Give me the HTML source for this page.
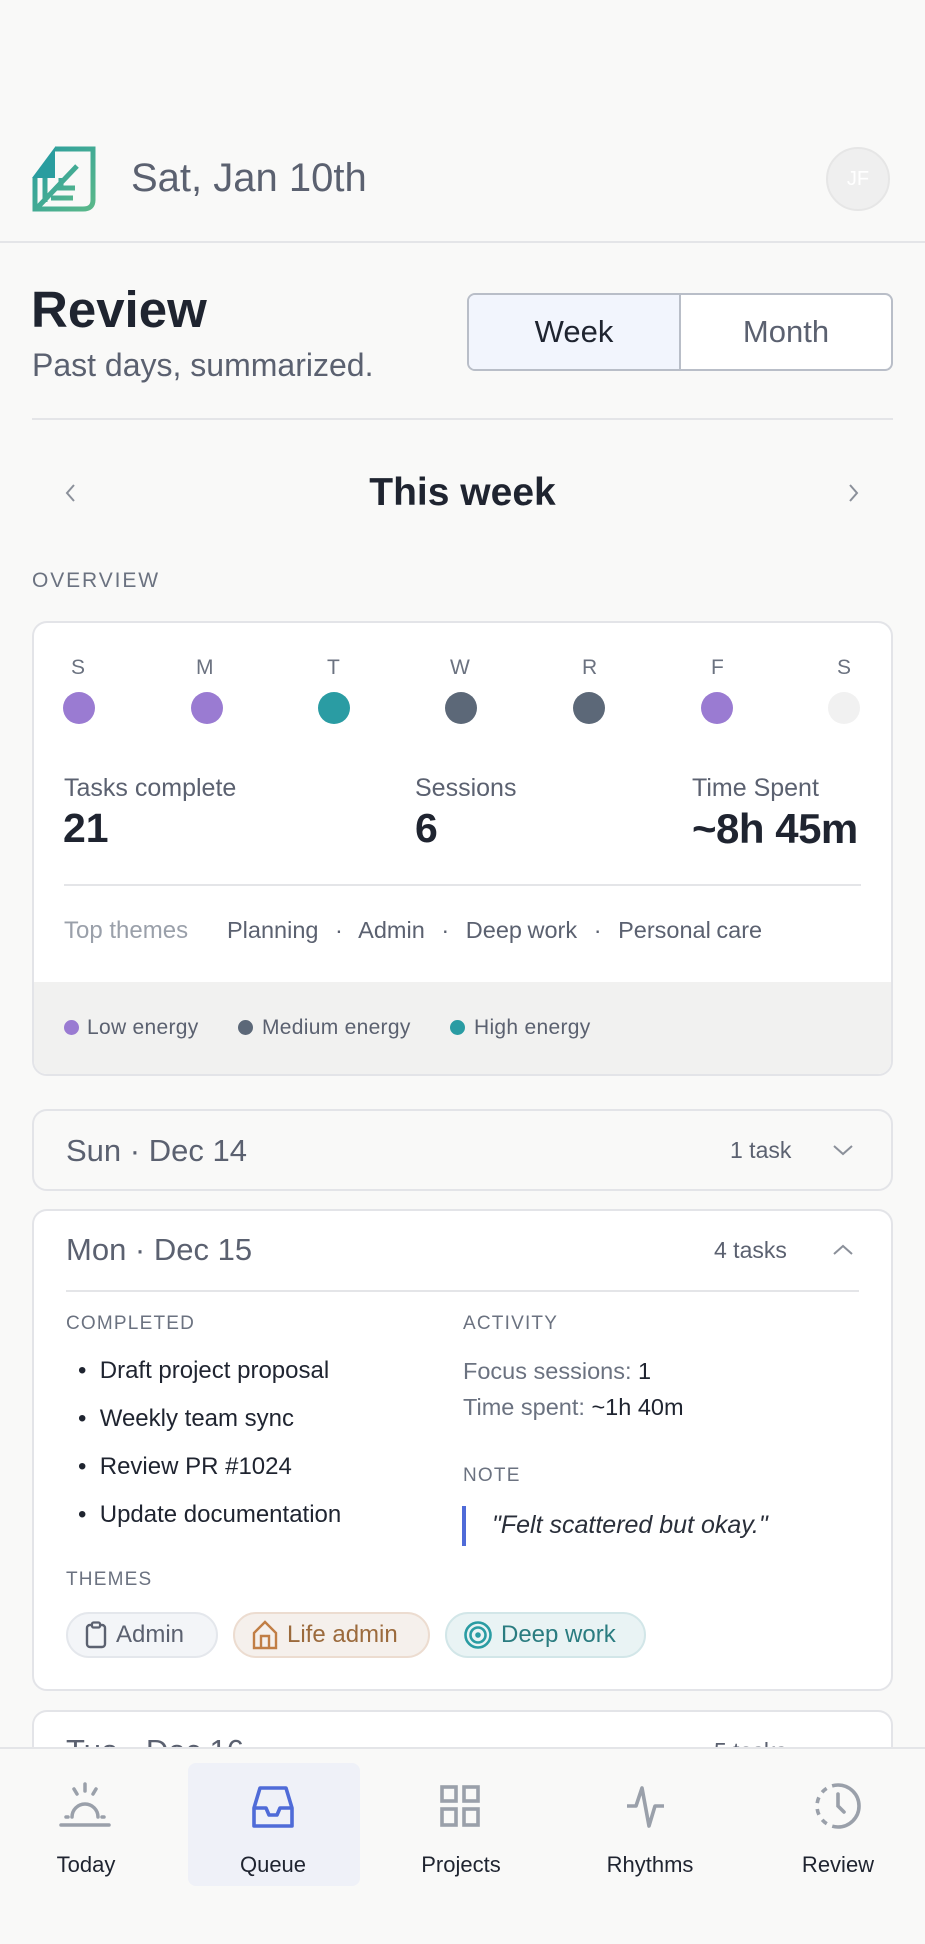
<!DOCTYPE html>
<html><head><meta charset="utf-8"><style>
*{margin:0;padding:0;box-sizing:border-box}
body{width:925px;height:1944px;background:#f9f9f8;font-family:"Liberation Sans",sans-serif;color:#1f2430;position:relative;overflow:hidden}
.a{position:absolute;white-space:nowrap}
.g{color:#6b7280}
.dot{position:absolute;width:32px;height:32px;border-radius:50%}
.lab{font-size:19px;letter-spacing:1.2px;color:#6b7280}
.card{position:absolute;left:32px;width:861px;background:#fff;border:2px solid #e3e4e8;border-radius:15px;overflow:hidden}
.chip{position:absolute;top:1612px;height:46px;border-radius:23px;font-size:24px;display:flex;align-items:center;gap:8px;padding-left:16px}
.nav{position:absolute;top:1852px;font-size:22px;transform:translateX(-50%);color:#1f2430}
</style></head><body>
<!-- header -->
<svg class="a" style="left:31px;top:146px" width="66" height="66" viewBox="0 0 66 66">
<defs><linearGradient id="lg" x1="0" y1="0" x2="1" y2="1"><stop offset="0" stop-color="#2a9d9f"/><stop offset="1" stop-color="#5ab88a"/></linearGradient></defs>
<path d="M24 3H62V54Q62 63 52 63H4V32" fill="none" stroke="url(#lg)" stroke-width="5"/>
<path d="M1 32L24 1V32Z" fill="#2a9d9f"/>
<path d="M14 32V56M6 62L46 20M26 42H44M30 32V42M20 52H42" fill="none" stroke="url(#lg)" stroke-width="5"/>
</svg>
<div class="a g" style="left:131px;top:156px;font-size:40px;color:#5b6170">Sat, Jan 10th</div>
<div class="a" style="left:826px;top:147px;width:64px;height:64px;border-radius:50%;background:#efefef;border:2px solid #e6e6e6;color:#fff;font-size:20px;display:flex;align-items:center;justify-content:center">JF</div>
<div class="a" style="left:0;top:241px;width:925px;height:2px;background:#e4e5e8"></div>
<div class="a" style="left:31px;top:280px;font-size:51px;font-weight:bold">Review</div>
<div class="a g" style="left:32px;top:347px;font-size:32px;color:#5b6170">Past days, summarized.</div>
<div class="a" style="left:467px;top:293px;width:426px;height:78px;border:2px solid #b9bec8;border-radius:8px;background:#fff;overflow:hidden">
<div class="a" style="left:0;top:0;width:212px;height:74px;background:#f2f5fd;border-right:2px solid #b9bec8;font-size:31px;display:flex;align-items:center;justify-content:center">Week</div>
<div class="a" style="left:212px;top:0;width:210px;height:74px;font-size:31px;color:#5b6170;display:flex;align-items:center;justify-content:center">Month</div>
</div>
<div class="a" style="left:32px;top:418px;width:861px;height:2px;background:#e4e5e8"></div>
<svg class="a" style="left:63px;top:482px" width="16" height="22"><path d="M11 3L4 11L11 19" fill="none" stroke="#8b909a" stroke-width="2"/></svg>
<div class="a" style="left:0;width:925px;text-align:center;top:471px;font-size:39px;font-weight:bold">This week</div>
<svg class="a" style="left:845px;top:482px" width="16" height="22"><path d="M5 3L12 11L5 19" fill="none" stroke="#8b909a" stroke-width="2"/></svg>
<div class="a" style="left:32px;top:569px;font-size:21px;letter-spacing:1.9px;color:#6b7280">OVERVIEW</div>
<!-- overview card -->
<div class="card" style="top:621px;height:455px">
<div class="a" style="left:0;top:359px;width:861px;height:96px;background:#f1f1f0"></div>
</div>
<div class="a g" style="left:0;top:656px;width:925px;font-size:21px">
<span class="a" style="left:71px">S</span><span class="a" style="left:196px">M</span><span class="a" style="left:327px">T</span><span class="a" style="left:450px">W</span><span class="a" style="left:582px">R</span><span class="a" style="left:711px">F</span><span class="a" style="left:837px">S</span></div>
<div class="dot" style="left:63px;top:692px;background:#9a7bd2"></div>
<div class="dot" style="left:191px;top:692px;background:#9a7bd2"></div>
<div class="dot" style="left:318px;top:692px;background:#2a9ca3"></div>
<div class="dot" style="left:445px;top:692px;background:#5c6878"></div>
<div class="dot" style="left:573px;top:692px;background:#5c6878"></div>
<div class="dot" style="left:701px;top:692px;background:#9a7bd2"></div>
<div class="dot" style="left:828px;top:692px;background:#f1f1f1"></div>
<div class="a g" style="left:64px;top:774px;font-size:25px;color:#5b6170">Tasks complete</div>
<div class="a g" style="left:415px;top:774px;font-size:25px;color:#5b6170">Sessions</div>
<div class="a g" style="left:692px;top:774px;font-size:25px;color:#5b6170">Time Spent</div>
<div class="a" style="left:63px;top:805px;font-size:41px;font-weight:bold">21</div>
<div class="a" style="left:415px;top:805px;font-size:41px;font-weight:bold">6</div>
<div class="a" style="left:692px;top:805px;font-size:42px;font-weight:bold;letter-spacing:-0.5px">~8h 45m</div>
<div class="a" style="left:64px;top:884px;width:797px;height:2px;background:#e4e5e8"></div>
<div class="a" style="left:64px;top:917px;font-size:24px;color:#9aa0aa">Top themes</div>
<div class="a" style="left:227px;top:917px;font-size:23.5px;color:#5b6170;word-spacing:-1px">Planning &nbsp; · &nbsp; Admin &nbsp; · &nbsp; Deep work &nbsp; · &nbsp; Personal care</div>
<div class="a" style="left:64px;top:1020px;width:15px;height:15px;border-radius:50%;background:#9a7bd2"></div>
<div class="a" style="left:87px;top:1016px;font-size:21px;letter-spacing:0.3px;color:#5b6170">Low energy</div>
<div class="a" style="left:238px;top:1020px;width:15px;height:15px;border-radius:50%;background:#5c6878"></div>
<div class="a" style="left:262px;top:1016px;font-size:21px;letter-spacing:0.3px;color:#5b6170">Medium energy</div>
<div class="a" style="left:450px;top:1020px;width:15px;height:15px;border-radius:50%;background:#2a9ca3"></div>
<div class="a" style="left:474px;top:1016px;font-size:21px;letter-spacing:0.3px;color:#5b6170">High energy</div>
<!-- Sun -->
<div class="card" style="top:1109px;height:82px;background:#f9f9f8"></div>
<div class="a" style="left:66px;top:1133px;font-size:31px;color:#5b6170">Sun · Dec 14</div>
<div class="a" style="left:730px;top:1137px;font-size:23px;color:#5b6170">1 task</div>
<svg class="a" style="left:831px;top:1142px" width="24" height="16"><path d="M3 4L12 12L21 4" fill="none" stroke="#8b909a" stroke-width="2"/></svg>
<!-- Mon -->
<div class="card" style="top:1209px;height:482px"></div>
<div class="a" style="left:66px;top:1232px;font-size:31px;color:#5b6170">Mon · Dec 15</div>
<div class="a" style="left:714px;top:1237px;font-size:23px;color:#5b6170">4 tasks</div>
<svg class="a" style="left:831px;top:1242px" width="24" height="16"><path d="M3 12L12 4L21 12" fill="none" stroke="#8b909a" stroke-width="2"/></svg>
<div class="a" style="left:66px;top:1290px;width:793px;height:2px;background:#e4e5e8"></div>
<div class="a lab" style="left:66px;top:1313px">COMPLETED</div>
<div class="a lab" style="left:463px;top:1313px">ACTIVITY</div>
<div class="a" style="left:78px;top:1347px;font-size:24px;line-height:48px">
<div>•&nbsp; Draft project proposal</div><div>•&nbsp; Weekly team sync</div><div>•&nbsp; Review PR #1024</div><div>•&nbsp; Update documentation</div></div>
<div class="a" style="left:463px;top:1358px;font-size:23.5px;color:#6b7280">Focus sessions: <span style="color:#1f2430">1</span></div>
<div class="a" style="left:463px;top:1394px;font-size:23.5px;color:#6b7280">Time spent: <span style="color:#1f2430">~1h 40m</span></div>
<div class="a lab" style="left:463px;top:1465px">NOTE</div>
<div class="a" style="left:462px;top:1506px;width:4px;height:40px;background:#4f6bd8"></div>
<div class="a" style="left:492px;top:1511px;font-size:25px;font-style:italic;color:#2a2f3a">"Felt scattered but okay."</div>
<div class="a lab" style="left:66px;top:1569px">THEMES</div>
<div class="chip" style="left:66px;width:152px;background:#f3f5f8;border:2px solid #e4e7ec;color:#5b6170">
<svg width="24" height="28" viewBox="0 0 24 28"><rect x="3" y="4" width="18" height="22" rx="3" fill="none" stroke="#5b6170" stroke-width="2.4"/><rect x="8" y="1.5" width="8" height="5" rx="1.5" fill="#f3f5f8" stroke="#5b6170" stroke-width="2.2"/></svg>Admin</div>
<div class="chip" style="left:233px;width:197px;background:#f5f0ec;border:2px solid #ecdcd0;color:#9b6a3c">
<svg width="28" height="30" viewBox="0 0 28 30"><path d="M3 28V13L14 2L25 13V28ZM10 28V16H18V28" fill="none" stroke="#c17e45" stroke-width="2.4"/></svg>Life admin</div>
<div class="chip" style="left:445px;width:201px;background:#e9f3f4;border:2px solid #d2e6e8;color:#2a7c80">
<svg width="30" height="30" viewBox="0 0 30 30"><circle cx="15" cy="15" r="12.5" fill="none" stroke="#2a9ca3" stroke-width="2.6"/><circle cx="15" cy="15" r="7.5" fill="none" stroke="#2a9ca3" stroke-width="2.6"/><circle cx="15" cy="15" r="2.8" fill="#2a9ca3"/></svg>Deep work</div>
<!-- Tue partial -->
<div class="card" style="top:1710px;height:100px"></div>
<div class="a" style="left:66px;top:1733px;font-size:31px;color:#5b6170">Tue · Dec 16</div>
<div class="a" style="left:714px;top:1738px;font-size:23px;color:#5b6170">5 tasks</div>
<!-- nav -->
<div class="a" style="left:0;top:1747px;width:925px;height:197px;background:#f9f9f8;border-top:2px solid #e4e5e8"></div>
<div class="a" style="left:188px;top:1763px;width:172px;height:123px;border-radius:8px;background:#eff1f8"></div>
<svg class="a" style="left:58px;top:1782px" width="54" height="50" viewBox="0 0 54 50"><path d="M27 2V9M16 7L19 12M38 7L35 12M3 43H51M8 35H10M46 35H44M14 35A13 13 0 0 1 40 35" fill="none" stroke="#9aa0aa" stroke-width="3.5" stroke-linecap="round"/></svg>
<svg class="a" style="left:248px;top:1782px" width="50" height="50" viewBox="0 0 50 50"><path d="M6 26V44H44V26L38 6H12ZM6 26H18L21 33H29L32 26H44" fill="none" stroke="#4f6bd8" stroke-width="3.6" stroke-linejoin="round"/></svg>
<svg class="a" style="left:436px;top:1782px" width="50" height="50" viewBox="0 0 50 50"><rect x="6" y="5" width="14" height="14" fill="none" stroke="#9aa0aa" stroke-width="3.6"/><rect x="28" y="5" width="14" height="14" fill="none" stroke="#9aa0aa" stroke-width="3.6"/><rect x="6" y="27" width="14" height="16" fill="none" stroke="#9aa0aa" stroke-width="3.6"/><rect x="28" y="27" width="14" height="16" fill="none" stroke="#9aa0aa" stroke-width="3.6"/></svg>
<svg class="a" style="left:624px;top:1782px" width="52" height="50" viewBox="0 0 52 50"><path d="M3 24H12L18 6L25 44L31 24H40" fill="none" stroke="#9aa0aa" stroke-width="3.6" stroke-linejoin="round"/></svg>
<svg class="a" style="left:812px;top:1780px" width="52" height="52" viewBox="0 0 52 52"><path d="M26 5A21 21 0 1 1 26 47" fill="none" stroke="#9aa0aa" stroke-width="3.6"/><path d="M26 5A21 21 0 0 0 26 47" fill="none" stroke="#9aa0aa" stroke-width="3.6" stroke-dasharray="6 6"/><path d="M26 14V26L32 32" fill="none" stroke="#9aa0aa" stroke-width="3.6" stroke-linecap="round"/></svg>
<div class="nav" style="left:86px">Today</div>
<div class="nav" style="left:273px">Queue</div>
<div class="nav" style="left:461px">Projects</div>
<div class="nav" style="left:650px">Rhythms</div>
<div class="nav" style="left:838px">Review</div>
</body></html>
